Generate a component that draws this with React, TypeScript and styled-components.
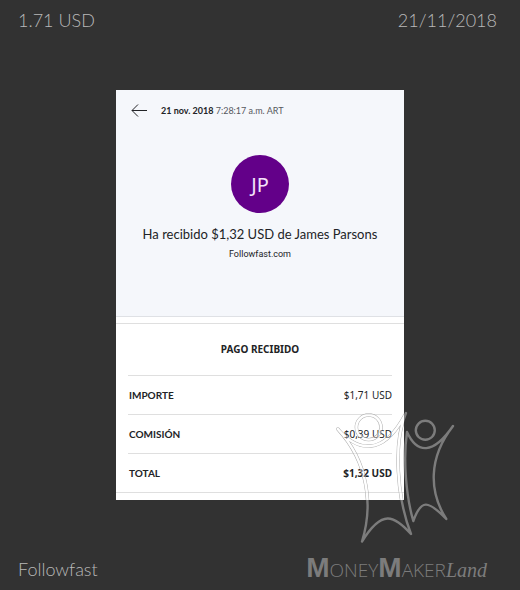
import React from "react";
import styled, { createGlobalStyle } from "styled-components";

const GlobalStyle = createGlobalStyle`
  * { box-sizing: border-box; }
  body { margin: 0; background: #323232; }
`;

const Page = styled.div`
  display: flex;
  flex-direction: column;
  min-height: 100vh;
  background: #323232;
  color: #b9b9b9;
  font-family: "Lato", sans-serif;
`;

const TopBar = styled.header`
  display: flex;
  justify-content: space-between;
  padding: 8px 23px 0 18px;
  height: 90px;
`;

const Caption = styled.span`
  font-size: 18px;
  line-height: 24px;
  font-weight: 300;
`;

const BottomBar = styled.footer`
  display: flex;
  justify-content: space-between;
  align-items: center;
  height: 42px;
  margin-top: auto;
  padding: 0 33px 0 18px;
`;

const Brand = styled.span`
  display: flex;
  align-items: baseline;
  color: #7c7c7c;
  font-family: "Open Sans", sans-serif;
  font-size: 19px;
  font-weight: 300;
  line-height: 38px;
`;

const BrandInitial = styled.b`
  font-family: "Liberation Sans", sans-serif;
  font-size: 28px;
  font-weight: 700;
`;

const BrandScript = styled.i`
  font-family: "Liberation Serif", cursive;
  font-size: 20px;
`;

const Card = styled.main`
  position: relative;
  width: 100%;
  max-width: 288px;
  margin: 0 auto;
  background: #fff;
  color: #222326;
  font-family: "Lato", sans-serif;
`;

const Hero = styled.section`
  background: #f5f7fb;
  border-bottom: 1px solid #dfe1e5;
  padding-bottom: 55px;
`;

const DateBar = styled.div`
  display: flex;
  align-items: center;
  gap: 14px;
  height: 41px;
  padding: 0 15px;
`;

const BackButton = styled.button`
  display: flex;
  padding: 0;
  border: 0;
  background: none;
  color: #222326;
  cursor: pointer;
`;

const Stamp = styled.time`
  font-size: 9px;
  line-height: 12px;
  color: #55585e;

  b {
    color: #222326;
  }
`;

const Sender = styled.div`
  display: flex;
  flex-direction: column;
  align-items: center;
  padding-top: 24px;
`;

const Avatar = styled.div`
  display: flex;
  align-items: center;
  justify-content: center;
  width: 58px;
  height: 58px;
  border-radius: 50%;
  background: #630089;
  color: #f5e3fb;
  font-family: "Noto Sans", sans-serif;
  font-size: 20px;
`;

const Title = styled.h1`
  margin: 12px 0 0;
  font-size: 13px;
  line-height: 18px;
  font-weight: 400;
  white-space: nowrap;
`;

const Subtitle = styled.p`
  margin: 4px 0 0;
  font-family: "Roboto", sans-serif;
  font-size: 9px;
  line-height: 14px;
`;

const Details = styled.section`
  margin-top: 6px;
  padding: 0 12px;
  border-top: 1px solid #dfdfdf;
  border-bottom: 1px solid #dfdfdf;
`;

const SectionTitle = styled.h2`
  margin: 0;
  font-family: "Noto Sans", sans-serif;
  font-size: 10px;
  line-height: 51px;
  font-weight: 700;
  text-align: center;
`;

const Amounts = styled.table`
  width: 100%;
  border-spacing: 0;
`;

const AmountRow = styled.tr<{ $strong?: boolean }>`
  font-size: 10px;
  line-height: 38px;

  th,
  td {
    padding: 0 1px;
    border-top: 1px solid #dfdfdf;
  }

  th {
    text-align: left;
    font-weight: 700;
  }

  td {
    padding-right: 0;
    font-family: "Noto Sans", sans-serif;
    text-align: right;
    font-weight: ${(p) => (p.$strong ? 700 : 400)};
  }
`;

const CardEnd = styled.div`
  height: 7px;
`;

const Mascots = styled.svg`
  position: absolute;
  left: 216px;
  top: 318px;
  pointer-events: none;
`;

function Figures() {
  return (
    <>
      <circle cx="36.7" cy="19.3" r="12.3" />
      <path d="M5.8 21 C25 43 51 50 74 5 C61 35 65 90 79 126 C62 107 50 101 30 133.5 C41 98 37 55 5.8 21Z" />
      <circle cx="93.3" cy="22.3" r="9.5" />
      <path d="M75 24 C85 46 101 47 121 18 C96 50 97 84 114.3 111 C96 92 89 91 81.3 113 C74 88 71 51 75 24Z" />
    </>
  );
}

const rows = [
  { label: "IMPORTE", amount: "$1,71 USD" },
  { label: "COMISIÓN", amount: "$0,39 USD" },
  { label: "TOTAL", amount: "$1,32 USD", strong: true },
];

export default function App() {
  return (
    <Page>
      <GlobalStyle />
      <TopBar>
        <Caption>1.71 USD</Caption>
        <Caption>21/11/2018</Caption>
      </TopBar>
      <Card>
        <Hero>
          <DateBar>
            <BackButton aria-label="Volver">
              <svg width="16" height="13" viewBox="0 0 16 13" fill="none" stroke="currentColor">
                <path d="M16 6.5H1M7 0.5L1 6.5L7 12.5" />
              </svg>
            </BackButton>
            <Stamp dateTime="2018-11-21T07:28:17-03:00">
              <b>21 nov. 2018</b> 7:28:17 a.m. ART
            </Stamp>
          </DateBar>
          <Sender>
            <Avatar>JP</Avatar>
            <Title>Ha recibido $1,32 USD de James Parsons</Title>
            <Subtitle>Followfast.com</Subtitle>
          </Sender>
        </Hero>
        <Details>
          <SectionTitle>PAGO RECIBIDO</SectionTitle>
          <Amounts>
            <tbody>
              {rows.map((r) => (
                <AmountRow key={r.label} $strong={r.strong}>
                  <th scope="row">{r.label}</th>
                  <td>{r.amount}</td>
                </AmountRow>
              ))}
            </tbody>
          </Amounts>
        </Details>
        <CardEnd />
        <Mascots width="126" height="140" viewBox="0 0 126 140" fill="none" strokeLinejoin="round" aria-hidden="true">
          <defs>
            <clipPath id="on-card">
              <rect width="72" height="92" />
            </clipPath>
            <clipPath id="off-card">
              <path d="M72 0H126V140H0V92H72Z" />
            </clipPath>
            <mask id="hollow" maskUnits="userSpaceOnUse" x="0" y="0" width="126" height="140">
              <rect width="126" height="140" fill="#fff" />
              <g stroke="#000" strokeWidth="2.4">
                <Figures />
              </g>
            </mask>
          </defs>
          <g clipPath="url(#on-card)">
            <g mask="url(#hollow)" stroke="#a8a8a8" strokeWidth="3.4">
              <Figures />
            </g>
            <g stroke="#ffffff" strokeWidth="2.4" opacity="0.35">
              <Figures />
            </g>
          </g>
          <g clipPath="url(#off-card)" stroke="#7c7c7c" strokeWidth="2.4">
            <Figures />
          </g>
        </Mascots>
      </Card>
      <BottomBar>
        <Caption>Followfast</Caption>
        <Brand>
          <BrandInitial>M</BrandInitial>ONEY<BrandInitial>M</BrandInitial>AKER
          <BrandScript>Land</BrandScript>
        </Brand>
      </BottomBar>
    </Page>
  );
}
